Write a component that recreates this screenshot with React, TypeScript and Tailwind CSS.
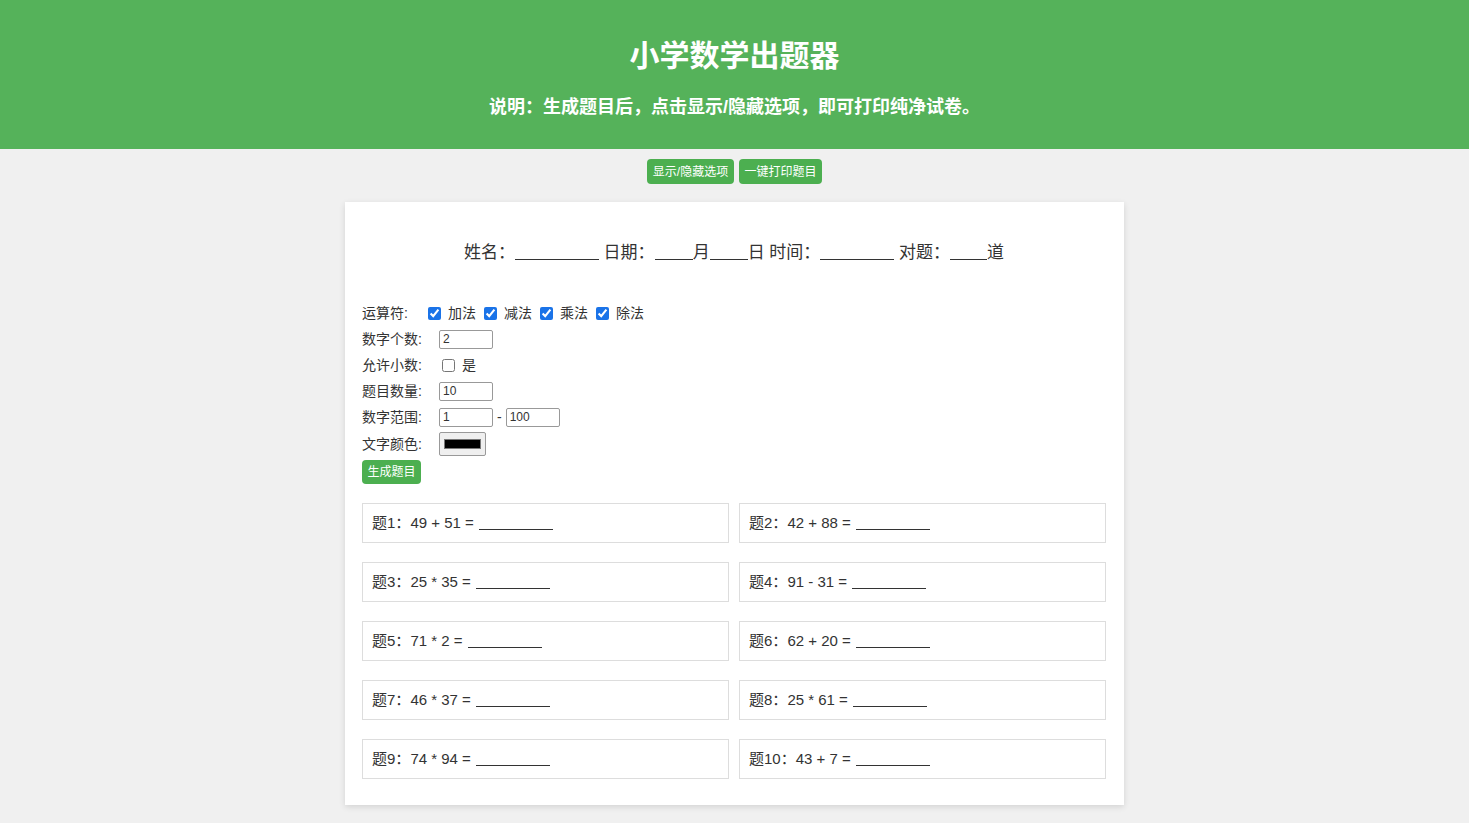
import React from 'react'

const font = { fontFamily: '"Liberation Sans", "Noto Sans CJK SC", sans-serif' }

const questions = [
  '49 + 51',
  '42 + 88',
  '25 * 35',
  '91 - 31',
  '71 * 2',
  '62 + 20',
  '46 * 37',
  '25 * 61',
  '74 * 94',
  '43 + 7',
]

function Blank({ w }: { w: string }) {
  return <span className={`inline-block h-[1px] border-b border-[#333] align-baseline relative top-[2px] ${w}`}></span>
}

function Label({ children, w = 'w-[77px]' }: { children: React.ReactNode; w?: string }) {
  return <span className={`shrink-0 ${w}`}>{children}</span>
}

const inputCls = 'w-[54px] h-[19px] border border-[#999] rounded-[2px] px-[3px] text-[12px]'

export default function App() {
  return (
    <div className="min-h-screen bg-[#f0f0f0] text-[#333]" style={font}>
      <header className="bg-[#55b25a] h-[149px] flex flex-col items-center text-white">
        <h1 className="text-[30px] font-bold mt-[36px] leading-[40px]">小学数学出题器</h1>
        <p className="text-[18px] font-bold mt-[18px] leading-[26px]">说明：生成题目后，点击显示/隐藏选项，即可打印纯净试卷。</p>
      </header>

      <div className="flex justify-center gap-[5px] mt-[10px]">
        <button className="bg-[#4caf50] text-white text-[12px] h-[25px] w-[87px] rounded-[4px]">显示/隐藏选项</button>
        <button className="bg-[#4caf50] text-white text-[12px] h-[25px] w-[83px] rounded-[4px]">一键打印题目</button>
      </div>

      <div className="w-[779px] mx-auto mt-[18px] bg-white shadow-[0_2px_6px_rgba(0,0,0,0.12)] pl-[17px] pr-[18px] pt-[38px] pb-[26px]">
        <div className="text-center text-[17px] leading-[26px]">
          姓名：<Blank w="w-[84px]" /> 日期：<Blank w="w-[38px]" />月<Blank w="w-[38px]" />日 时间：<Blank w="w-[74px]" /> 对题：<Blank w="w-[37px]" />道
        </div>

        <div className="mt-[34px] text-[14px] flex flex-col">
          <div className="flex items-center h-[26px]">
            <Label w="w-[66px]">运算符:</Label>
            {['加法', '减法', '乘法', '除法'].map((t) => (
              <label key={t} className="flex items-center mr-[8px]">
                <input type="checkbox" defaultChecked className="w-[13px] h-[13px] mr-[7px] accent-[#1a73e8]" />
                {t}
              </label>
            ))}
          </div>
          <div className="flex items-center h-[26px]">
            <Label>数字个数:</Label>
            <input defaultValue="2" className={inputCls} />
          </div>
          <div className="flex items-center h-[26px]">
            <Label>允许小数:</Label>
            <input type="checkbox" className="w-[13px] h-[13px] ml-[3px] mr-[7px]" />
            是
          </div>
          <div className="flex items-center h-[26px]">
            <Label>题目数量:</Label>
            <input defaultValue="10" className={inputCls} />
          </div>
          <div className="flex items-center h-[26px]">
            <Label>数字范围:</Label>
            <input defaultValue="1" className={inputCls} />
            <span className="mx-[4px]">-</span>
            <input defaultValue="100" className={inputCls} />
          </div>
          <div className="flex items-center h-[28px]">
            <Label>文字颜色:</Label>
            <input type="color" defaultValue="#000000" className="w-[47px] h-[24px] border border-[#999] rounded-[2px] bg-[#efefef] p-[2px]" />
          </div>
          <div className="mt-[2px]">
            <button className="bg-[#4caf50] text-white text-[12px] h-[24px] w-[59px] rounded-[4px]">生成题目</button>
          </div>
        </div>

        <div className="grid grid-cols-2 gap-x-[10px] gap-y-[19px] mt-[19px]">
          {questions.map((q, i) => (
            <div key={i} className="h-[40px] border border-[#ddd] flex items-center px-[9px] text-[15px]">
              题{i + 1}：{q} = <span className="ml-[5px]"><Blank w="w-[74px]" /></span>
            </div>
          ))}
        </div>
      </div>
    </div>
  )
}
